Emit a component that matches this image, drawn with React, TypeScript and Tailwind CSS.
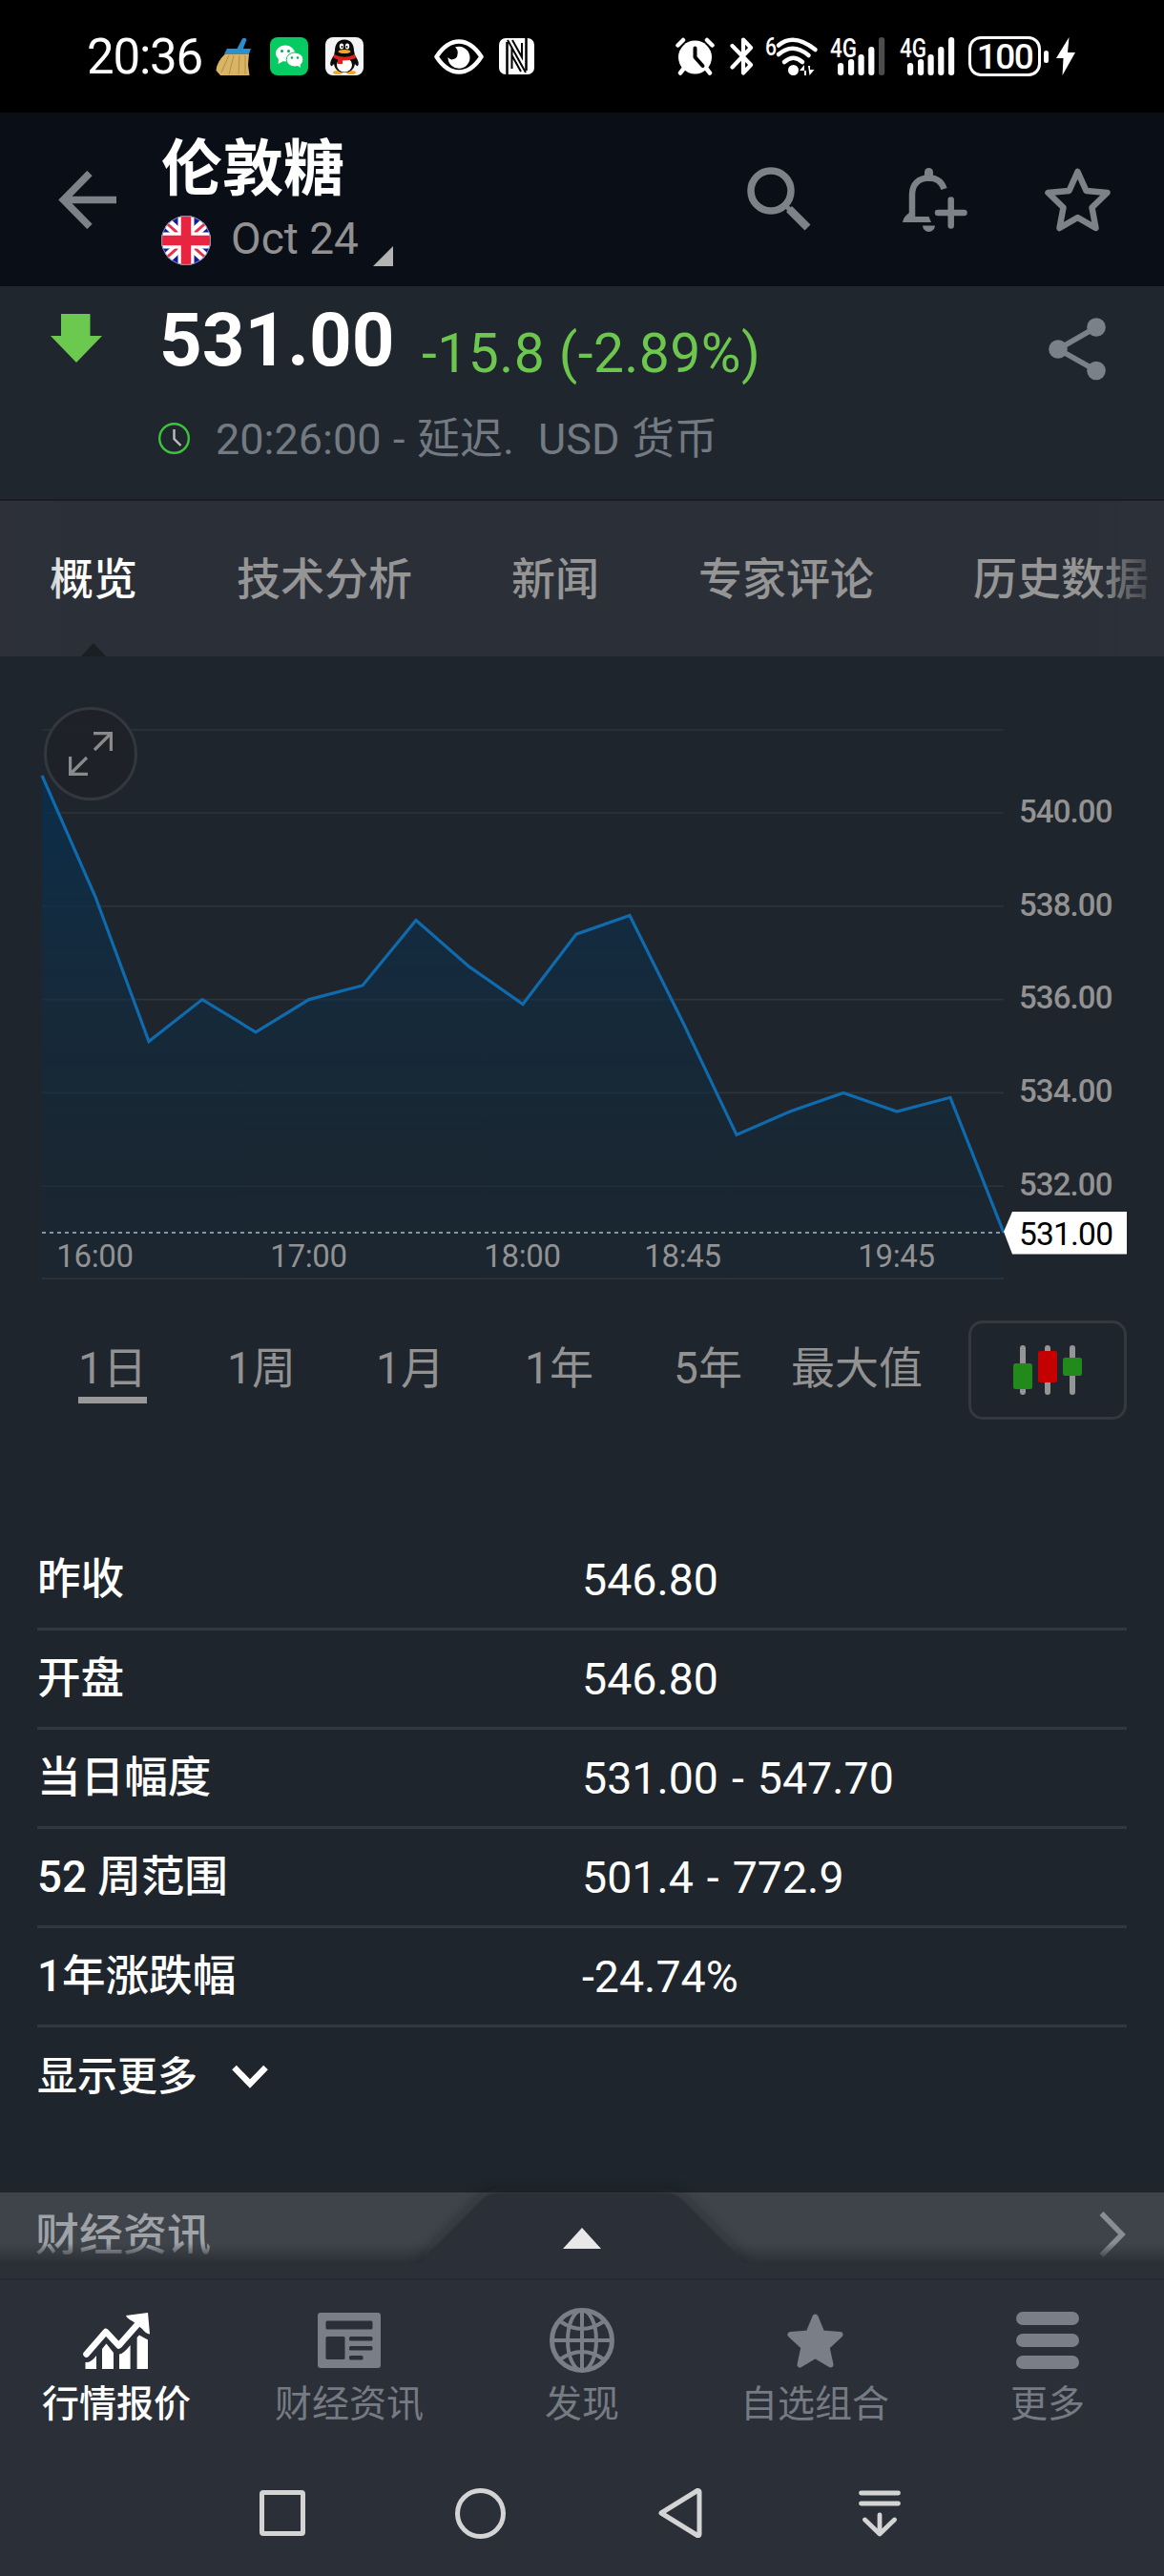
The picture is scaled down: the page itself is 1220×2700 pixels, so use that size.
import type { ReactNode } from "react";

const prices = [
  540.8, 538.2, 535.1, 536.0, 535.3, 536.0, 536.3, 537.7, 536.7, 535.9,
  537.4, 537.8, 535.5, 533.1, 533.6, 534.0, 533.6, 533.9, 531.0,
];

const tabs = ["概览", "技术分析", "新闻", "专家评论", "历史数据"];
const ranges = ["1日", "1周", "1月", "1年", "5年", "最大值"];

const stats = [
  { label: "昨收", value: "546.80" },
  { label: "开盘", value: "546.80" },
  { label: "当日幅度", value: "531.00 - 547.70" },
  { label: "52 周范围", value: "501.4 - 772.9" },
  { label: "1年涨跌幅", value: "-24.74%" },
];

function Signal({ dim = false }: { dim?: boolean }) {
  return (
    <svg className="overflow-visible" width="58" height="41" viewBox="0 0 58 41" fill="white">
      <text x="0" y="20.5" fontSize="27" fontWeight="500" textLength="28" lengthAdjust="spacingAndGlyphs">4G</text>
      <rect x="8" y="27" width="6.2" height="13" rx="3" />
      <rect x="19" y="23" width="6.2" height="17" rx="3" />
      <rect x="29.5" y="18" width="6.2" height="22" rx="3" />
      <rect x="40.2" y="10" width="6.2" height="30" rx="3" />
      <rect x="51" y="0" width="6.2" height="40" rx="3" fill={dim ? "#4d4d4d" : "white"} />
    </svg>
  );
}

function StatusBar() {
  return (
    <div className="flex h-[118px] items-center bg-black pl-[91px] text-white">
      <span className="w-[135px] pt-[2px] text-[51px] leading-[60px] tracking-[-1.2px]">20:36</span>
      {/* broom */}
      <svg width="38" height="40" viewBox="0 0 38 40">
        <path d="M28 1.5 Q31 -0.5 32.5 2.5 L28 14 L22 13Z" fill="#2a8fce" />
        <path d="M12 12 L37 12 L35 17.5 L9 17.5Z" fill="#2492d6" />
        <path d="M10 17.5 H35 L34 29 L35.5 40 H5 L0.5 35 Q1 26 10 17.5Z" fill="#d9b466" />
        <path d="M14 19 L6 37 M19 19 L14 39 M25 19 L24 39 M31 19 L31 39" stroke="#b58d42" strokeWidth="1" />
      </svg>
      {/* wechat */}
      <svg className="ml-[19px]" width="40" height="40" viewBox="0 0 40 40">
        <rect width="40" height="40" rx="8" fill="#06cb62" />
        <ellipse cx="16" cy="17" rx="10" ry="8.5" fill="white" />
        <path d="M9 23 L8.5 28 L14 25Z" fill="white" />
        <circle cx="12.5" cy="14.5" r="1.5" fill="#06a850" />
        <circle cx="19.5" cy="14.5" r="1.5" fill="#06a850" />
        <ellipse cx="26" cy="23.5" rx="8.8" ry="7.5" fill="white" stroke="#06cb62" strokeWidth="1" />
        <path d="M28 29 L32 32 L31.5 27Z" fill="white" />
        <circle cx="23" cy="21.5" r="1.2" fill="#06a850" />
        <circle cx="29" cy="21.5" r="1.2" fill="#06a850" />
      </svg>
      {/* qq */}
      <svg className="ml-[18px]" width="40" height="40" viewBox="0 0 40 40">
        <rect width="40" height="40" rx="8" fill="#f4f4f6" />
        <ellipse cx="13" cy="37" rx="5" ry="2" fill="#f5a623" />
        <ellipse cx="27" cy="37" rx="5" ry="2" fill="#f5a623" />
        <path d="M20 2.5 C27 2.5 30 8 30 14 L31 19 C34 23 36 28 34 30 C33 31 31 28 31 28 C30 34 26 37 20 37 C14 37 10 34 9 28 C9 28 7 31 6 30 C4 28 6 23 9 19 L10 14 C10 8 13 2.5 20 2.5Z" fill="#0a0a0a" />
        <ellipse cx="20" cy="29" rx="8" ry="7.5" fill="white" />
        <ellipse cx="17" cy="9.5" rx="2.2" ry="3" fill="white" />
        <ellipse cx="23" cy="9.5" rx="2.2" ry="3" fill="white" />
        <circle cx="17.5" cy="10" r="1" fill="black" />
        <circle cx="22.5" cy="10" r="1" fill="black" />
        <ellipse cx="20" cy="15" rx="6.5" ry="2" fill="#f5a623" />
        <path d="M9 18 Q20 23.5 31 18 L32 22 Q26 24.5 18 24.5 V28 H13 V23.5 L8.5 21.5Z" fill="#e0201b" />
      </svg>
      {/* eye comfort */}
      <svg className="ml-[74px]" width="52" height="37" viewBox="0 0 52 37">
        <path d="M2.5 18.500 Q13 2.5 26 2.5 Q39 2.5 49.5 18.500 Q39 34.500 26 34.500 Q13 34.500 2.5 18.500Z" fill="none" stroke="white" strokeWidth="4.5" strokeLinejoin="round" />
        <path d="M22 8.5 A11.500 11.500 0 1 1 14.500 19 A5.500 5.500 0 0 0 24.500 16 Q25.500 11 22 8.500Z" fill="white" />
      </svg>
      {/* nfc */}
      <svg className="ml-[16px]" width="37" height="38" viewBox="0 0 37 38">
        <rect width="37" height="38" rx="7" fill="white" />
        <path d="M8.5 38 V4 M28.500 0 V34" fill="none" stroke="black" strokeWidth="2.5" />
        <path d="M9 2 L28 36 M13.500 18 L23 35 M13.500 10 V32 M14 2 L24 20 V5" fill="none" stroke="black" strokeWidth="2" />
      </svg>
      {/* alarm */}
      <svg className="ml-[148px]" width="41" height="40" viewBox="0 0 41 40">
        <circle cx="20.5" cy="21" r="17.5" fill="white" />
        <path d="M2.5 8.5 L8 3 M38.5 8.5 L33 3 M8.5 33 L5 37.5 M32.5 33 L36 37.5" stroke="white" strokeWidth="4.5" strokeLinecap="round" />
        <path d="M20.5 11.5 V21 L28.5 30" fill="none" stroke="black" strokeWidth="4" strokeLinecap="round" strokeLinejoin="round" />
      </svg>
      <svg className="ml-[16px]" width="25" height="40" viewBox="0 0 25 40" fill="none" stroke="white" strokeWidth="4.2" strokeLinecap="round" strokeLinejoin="round">
        <path d="M2.5 9 L22 29 L14 37.5 V2.5 L22 11 L2.5 31.5" />
      </svg>
      {/* wifi 6 */}
      <svg className="ml-[12px] overflow-visible" width="56" height="42" viewBox="0 0 56 42">
        <text x="0" y="19.5" fontSize="26" fontWeight="500" fill="white" textLength="12" lengthAdjust="spacingAndGlyphs">6</text>
        <g fill="none" stroke="white" strokeWidth="4.5" strokeLinecap="round">
          <path d="M14 9.5 Q30 -4 52.5 14" />
          <path d="M14 19 Q29 6 45.5 20" />
          <path d="M20 27 Q29.5 18.5 39 27" />
        </g>
        <circle cx="29.5" cy="35.5" r="5.5" fill="white" />
        <path d="M36 36 L41 30 V41 H43 V36 Z M45 31 H47 V35 H51.5 L46.5 41Z" fill="white" />
      </svg>
      <div className="ml-[12px] flex gap-[15px]">
        <Signal dim />
        <Signal />
      </div>
      {/* battery */}
      <div className="ml-[14px] flex h-[42px] w-[76px] items-center justify-center rounded-[13px] border-[3.5px] border-white pt-px text-[37px] leading-[38px] font-medium tracking-[-1.5px]">
        100
      </div>
      <div className="ml-[3px] h-[13px] w-[5px] rounded-full bg-white" />
      <svg className="ml-[8px]" width="20" height="40" viewBox="0 0 20 40" fill="white">
        <path d="M13.500 0 L0 22 H7.500 L6.500 40 L20 16 H12Z" />
      </svg>
    </div>
  );
}

function Header() {
  return (
    <div className="flex h-[182px] bg-[#0a0e16] pl-[61px]">
      <svg className="mt-[61px]" width="62" height="61" viewBox="0 0 62 61" fill="none" stroke="#7d8289" strokeWidth="7.5">
        <path d="M61 30.5 H6 M33 2.5 L5.5 30.5 L33 58.5" />
      </svg>
      <div className="ml-[46px] w-[614px]">
        <h1 className="mt-[24px] text-[64px] leading-[72px] font-bold text-white">伦敦糖</h1>
        <div className="mt-[11px] flex h-[54px] items-center">
          <svg width="52" height="52" viewBox="0 0 52 52">
            <clipPath id="flag"><circle cx="26" cy="26" r="26" /></clipPath>
            <g clipPath="url(#flag)">
              <rect width="52" height="52" fill="#1019a0" />
              <path d="M0 2 L52 50 M52 2 L0 50" stroke="white" strokeWidth="11" />
              <path d="M0 3 L52 49 M52 3 L0 49" stroke="#e9304a" strokeWidth="3" />
              <path d="M26 0 V52 M0 26 H52" stroke="white" strokeWidth="17" />
              <path d="M26 0 V52 M0 26 H52" stroke="#e92440" strokeWidth="10.5" />
            </g>
            <circle cx="26" cy="26" r="25.5" fill="none" stroke="#8d93a8" />
          </svg>
          <span className="-mt-[4px] ml-[21px] text-[46px] leading-[54px] text-[#919191]">Oct 24</span>
          <svg className="ml-[15px] self-end" width="21" height="21" viewBox="0 0 21 21">
            <path d="M21 0 V21 H0Z" fill="#b3b3b3" />
          </svg>
        </div>
      </div>
      <svg className="mt-[57px]" width="67" height="67" viewBox="0 0 67 67" fill="none" stroke="#7d8289">
        <circle cx="25" cy="25" r="21" strokeWidth="7.5" />
        <path d="M41 41 L46 46" strokeWidth="5" />
        <path d="M44 44 L63.5 63.5" strokeWidth="8.5" />
      </svg>
      {/* add alert */}
      <svg className="mt-[58px] ml-[96px]" width="68" height="68" viewBox="0 0 68 68" fill="#7d8289">
        <rect x="23" y="0" width="9" height="14" rx="4.5" />
        <path d="M10 52 V28 C10 17 17 10.5 27.5 10.5 C35 10.5 41 14.5 43.5 22" fill="none" stroke="#7d8289" strokeWidth="6.5" />
        <path d="M0 57 Q1 51 7 47 V51 H27.5 L30 57Z" />
        <path d="M21 60.5 H34 A6.5 6.5 0 0 1 21 60.5Z" />
        <path d="M37 47 H64.5 M50.7 33.5 V60.5" stroke="#7d8289" strokeWidth="6.5" strokeLinecap="round" />
      </svg>
      <svg className="mt-[58px] ml-[81px]" width="69" height="67" viewBox="0 0 69 67" fill="none" stroke="#7d8289" strokeWidth="6.5" strokeLinejoin="round">
        <path d="M34.5 4 L43.5 24 L65.5 26 L49.5 41.5 L53.5 63 L34.5 52 L15.5 63 L19.5 41.5 L3.5 26 L25.5 24Z" />
      </svg>
    </div>
  );
}

function Quote() {
  return (
    <div className="h-[225px] border-b-2 border-[#1a1d24] bg-[#20262d] pt-[16px]">
      <div className="flex h-[80px] pl-[53px]">
        <svg className="mt-[13px]" width="54" height="51" viewBox="0 0 54 51" fill="#6cc94f">
          <path d="M11 0 H41.5 V23 H54 L27 51 L0 23 H11Z" />
        </svg>
        <span className="ml-[60px] w-[275px] text-[78px] leading-[82px] font-bold text-white">531.00</span>
        <span className="mt-[25px] w-[657px] text-[57px] leading-[60px] tracking-[0.45px] text-[#6dc64e]">-15.8 (-2.89%)</span>
        <svg className="mt-[17px]" width="60" height="66" viewBox="0 0 60 66" fill="#7b8189">
          <path d="M50 10 L10 33 L50 55.5" fill="none" stroke="#7b8189" strokeWidth="5.5" />
          <circle cx="50" cy="10" r="9.8" />
          <circle cx="10" cy="33" r="9.8" />
          <circle cx="50" cy="55.5" r="9.8" />
        </svg>
      </div>
      <div className="mt-[40px] flex h-[50px] items-center pl-[166px]">
        <svg className="-mt-[3px]" width="33" height="33" viewBox="0 0 33 33" fill="none">
          <circle cx="16.5" cy="16.5" r="15.3" stroke="#3cc43c" strokeWidth="2.4" />
          <path d="M16.5 7 V17 L23.5 24" stroke="#bdbdbd" strokeWidth="2.4" />
        </svg>
        <span className="ml-[27px] text-[45px] leading-[50px] [word-spacing:1.4px] whitespace-pre text-[#737a82]">{"20:26:00 - 延迟.  USD 货币"}</span>
      </div>
    </div>
  );
}

function Tabs() {
  return (
    <div className="relative h-[163px] overflow-hidden bg-[#2b3038]">
      <div className="flex h-[163px] items-center gap-[104px] pl-[52px] text-[46px] leading-[54px] font-medium whitespace-nowrap text-[#959595]">
        {tabs.map((tab, i) => (
          <span key={tab} className={i === 0 ? "text-white" : ""}>{tab}</span>
        ))}
      </div>
      <div className="absolute inset-y-0 right-0 w-[72px] bg-linear-to-r from-[#2d3038]/0 to-[#2d3038]" />
      <div className="absolute inset-y-0 left-0 w-[72px] bg-linear-to-l from-[#2d3038]/0 to-[#2d3038]" />
      <svg className="absolute bottom-0 left-[85px]" width="26" height="14" viewBox="0 0 26 14">
        <path d="M13 0 L26 14 H0Z" fill="#1b1e22" />
      </svg>
    </div>
  );
}

function Chart() {
  const y = (p: number) => 164 + (540 - p) * 48.9;
  const points = prices.map((p, i) => `${44 + i * 56},${y(p)}`).join(" ");
  return (
    <div className="relative h-[690px]">
      <svg width="1220" height="690" viewBox="0 0 1220 690">
        <defs>
          <linearGradient id="area" x1="0" y1="125" x2="0" y2="652" gradientUnits="userSpaceOnUse">
            <stop offset="0" stopColor="#062f50" stopOpacity="0.8" />
            <stop offset="0.3" stopColor="#0b2f4c" stopOpacity="0.6" />
            <stop offset="0.8" stopColor="#10293a" stopOpacity="0.4" />
            <stop offset="1" stopColor="#14283a" stopOpacity="0.3" />
          </linearGradient>
        </defs>
        <g stroke="#2d343b" strokeWidth="1.6">
          {[77, 164, 261.8, 359.6, 457.4, 555.2].map((line) => (
            <path key={line} d={`M44 ${line} H1052`} />
          ))}
          <path d="M44 652 H1052" strokeWidth="2" />
        </g>
        <polygon points={`44,652 ${points} 1052,652`} fill="url(#area)" />
        <polyline points={points} fill="none" stroke="#0f6bad" strokeWidth="3.2" />
        <path d="M44 604 H1052" stroke="#8e959b" strokeWidth="1.8" strokeDasharray="4 4" />
        <g fill="#929292" fontSize="33" textAnchor="middle" letterSpacing="-0.3">
          <text x="99.5" y="640">16:00</text>
          <text x="323.5" y="640">17:00</text>
          <text x="547.5" y="640">18:00</text>
          <text x="715.5" y="640">18:45</text>
          <text x="939.5" y="640">19:45</text>
        </g>
        <g fill="#929292" fontSize="33" fontWeight="500" letterSpacing="-0.9">
          {[540, 538, 536, 534, 532].map((p) => (
            <text key={p} x="1068" y={y(p) + 9.7}>{p}.00</text>
          ))}
        </g>
        <path d="M1052 603 L1061 582 H1181 V626.5 H1061Z" fill="white" />
        <text x="1068" y="617" fontSize="33.5" letterSpacing="-0.8">531.00</text>
      </svg>
      <button className="absolute top-[53px] left-[46px] flex size-[98px] items-center justify-center rounded-full border-3 border-[#33373f] bg-[#1e2228]/90">
        <svg width="46" height="46" viewBox="0 0 46 46" fill="none" stroke="#8a8a8a" strokeWidth="3.2">
          <path d="M26 1.6 H44.4 V20 M44 2 L27 19 M1.6 26 V44.4 H20 M2 44 L19 27" />
        </svg>
      </button>
    </div>
  );
}

function RangePicker() {
  return (
    <div className="flex h-[104px] items-center pl-[40px]">
      {ranges.map((range, i) => (
        <div key={range} className="-mt-[3px] flex w-[156px] justify-center text-[46px] leading-[54px] text-[#929292]">
          <span className={i === 0 ? "h-[72px] border-b-7 border-[#999] pt-[8px]" : "h-[72px] pt-[8px]"}>{range}</span>
        </div>
      ))}
      <button className="ml-[39px] flex h-[104px] w-[166px] items-center justify-center rounded-[15px] border-3 border-[#34383f]">
        <svg width="72" height="52" viewBox="0 0 72 52">
          <path d="M10 3 V49 M36 3 V49 M62 3 V49" stroke="#959595" strokeWidth="6" strokeLinecap="round" />
          <rect x="0" y="19" width="20" height="27" rx="2.5" fill="#218a1a" />
          <rect x="26" y="6" width="20" height="33" rx="2.5" fill="#c40000" />
          <rect x="52" y="13" width="20" height="19" rx="2.5" fill="#218a1a" />
        </svg>
      </button>
    </div>
  );
}

function Stats() {
  return (
    <div className="mt-[117px] h-[693px] px-[39px] text-white">
      {stats.map((row) => (
        <div key={row.label} className="flex h-[104px] items-center border-b-3 border-[#323840] text-[45.6px] leading-[54px]">
          <span className="w-[571px] font-medium">{row.label}</span>
          <span className="text-[46.5px] [word-spacing:2.5px]">{row.value}</span>
        </div>
      ))}
      <div className="flex h-[102px] items-center pt-px text-[42px] leading-[50px] font-medium">
        显示更多
        <svg className="ml-[36px]" width="38" height="26" viewBox="0 0 38 26" fill="none" stroke="white" strokeWidth="6.5">
          <path d="M2.5 3 L19 20 L35.5 3" />
        </svg>
      </div>
    </div>
  );
}

function NewsDrawer() {
  return (
    <div className="relative flex h-[92px] items-start justify-between border-b-2 border-[#262a31] bg-[#2b3038]">
      <div className="flex h-[73px] w-full items-start justify-between bg-[#3f444b] pt-[17px] pr-[40px] pl-[37px]">
        <span className="text-[46px] leading-[54px] font-medium text-[#9fa3a7]">财经资讯</span>
        <svg className="mt-[2px]" width="28" height="50" viewBox="0 0 28 50" fill="none" stroke="#8a8e92" strokeWidth="5.5">
          <path d="M2.5 3 L24 25 L2.5 47" />
        </svg>
      </div>
      <div className="absolute inset-x-0 top-[53px] h-[20px] bg-linear-to-b from-[#2d3137]/0 to-[#2d3137]" />
      {/* raised handle in the middle of the drawer */}
      <svg className="absolute -top-[24px] left-[400px]" width="420" height="98" viewBox="0 0 420 98">
        <defs>
          <filter id="soft" x="-20%" y="-50%" width="140%" height="200%">
            <feGaussianBlur stdDeviation="8" />
          </filter>
        </defs>
        <path d="M40 97 L104 33 Q111 25 122 25 H298 Q309 25 316 33 L380 97Z" fill="#17191b" opacity="0.6" filter="url(#soft)" />
        <path d="M40 98 L104 33 Q111 25 122 25 H298 Q309 25 316 33 L380 98Z" fill="#2b3038" />
        <path d="M210 61 L230 83 H190Z" fill="#e8e8e8" />
      </svg>
    </div>
  );
}

function NavItem({ label, active = false, children }: { label: string; active?: boolean; children: ReactNode }) {
  return (
    <div className="flex w-[244px] flex-col items-center">
      <div className="flex h-[68px] items-center justify-center">{children}</div>
      <span className={active ? "mt-[9px] text-[39px] leading-[48px] font-medium text-white" : "mt-[9px] text-[39px] leading-[48px] text-[#767b83]"}>
        {label}
      </span>
    </div>
  );
}

function BottomNav() {
  return (
    <div className="flex h-[180px] bg-[#2b3038] pt-[29px]">
      <NavItem label="行情报价" active>
        <svg width="71" height="59" viewBox="0 0 71 59" fill="white">
          <path d="M3.5 43.5 L23.9 20 L37.5 34.5 L60 9" fill="none" stroke="white" strokeWidth="6.5" strokeLinecap="round" strokeLinejoin="round" />
          <path d="M45 3 L68 0 L70 22.5 Q66 22 62 17 L52 9 Q46 6 45 3Z" />
          <path d="M2.5 52 Q8 53 14 45 V59 H2.5Z" />
          <path d="M20 38 L24.5 32.5 L32 42 V59 H20Z" />
          <path d="M38 43.5 Q42 43.5 49.6 34 V59 H38Z" />
          <path d="M56.6 26 L59 23.5 L68 28.5 V59 H56.6Z" />
        </svg>
      </NavItem>
      <NavItem label="财经资讯">
        <svg width="66" height="58" viewBox="0 0 66 58" fill="#2b3038">
          <rect width="66" height="58" rx="3" fill="#7a7e86" />
          <rect x="8.5" y="8.5" width="49" height="9" rx="1.5" />
          <rect x="8.5" y="25" width="20" height="24" rx="1.5" />
          <rect x="33" y="25" width="24.5" height="4.5" rx="1.5" />
          <rect x="33" y="35" width="24.5" height="4.5" rx="1.5" />
          <rect x="33" y="45" width="14.5" height="4.5" rx="1.5" />
        </svg>
      </NavItem>
      <NavItem label="发现">
        <svg width="68" height="68" viewBox="0 0 68 68" fill="none" stroke="#7a7e86" strokeWidth="4">
          <circle cx="34" cy="34" r="31.5" strokeWidth="5" />
          <ellipse cx="34" cy="34" rx="15" ry="31.5" />
          <path d="M34 2 V66 M2 34 H66 M11 14 Q34 30 57 14 M11 54 Q34 38 57 54" />
        </svg>
      </NavItem>
      <NavItem label="自选组合">
        <svg width="59" height="57" viewBox="0 0 59 57" fill="#7a7e86" stroke="#7a7e86" strokeWidth="6" strokeLinejoin="round">
          <path d="M29.5 3.5 L36.5 20.5 L55.5 22 L41.5 35 L45.5 53.5 L29.5 44 L13.5 53.5 L17.5 35 L3.5 22 L22.5 20.5Z" />
        </svg>
      </NavItem>
      <NavItem label="更多">
        <svg width="66" height="60" viewBox="0 0 66 60" fill="#7a7e86">
          <rect y="0" width="66" height="14" rx="7" />
          <rect y="23" width="66" height="14" rx="7" />
          <rect y="46" width="66" height="14" rx="7" />
        </svg>
      </NavItem>
    </div>
  );
}

function SystemNav() {
  return (
    <div className="flex h-[130px] items-center bg-[#2b3038] pb-[2px] pl-[272px]">
      <div className="size-[48px] rounded-[4px] border-5 border-[#d4d4d4]" />
      <div className="ml-[157px] size-[53px] rounded-full border-5 border-[#d4d4d4]" />
      <svg className="ml-[160px]" width="46" height="54" viewBox="0 0 46 54" fill="none" stroke="#d4d4d4" strokeWidth="5" strokeLinejoin="round">
        <path d="M3 27 L41 3.5 Q43 3 43 5 V49 Q43 51 41 50.5Z" />
      </svg>
      <svg className="ml-[164px]" width="44" height="49" viewBox="0 0 44 49" fill="none" stroke="#d4d4d4" strokeWidth="4.8" strokeLinecap="round" strokeLinejoin="round">
        <path d="M2.5 3 H41.5 M2.5 14 H41.5 M22 26 V45 M6.5 31 L22 46 L37.5 31" />
      </svg>
    </div>
  );
}

export default function App() {
  return (
    <div className="w-[1220px] overflow-hidden bg-[#1f252c] font-['Roboto','Noto_Sans_CJK_SC',sans-serif]">
      <StatusBar />
      <Header />
      <Quote />
      <Tabs />
      <Chart />
      <div className="h-[6px]" />
      <RangePicker />
      <Stats />
      <NewsDrawer />
      <BottomNav />
      <SystemNav />
    </div>
  );
}
